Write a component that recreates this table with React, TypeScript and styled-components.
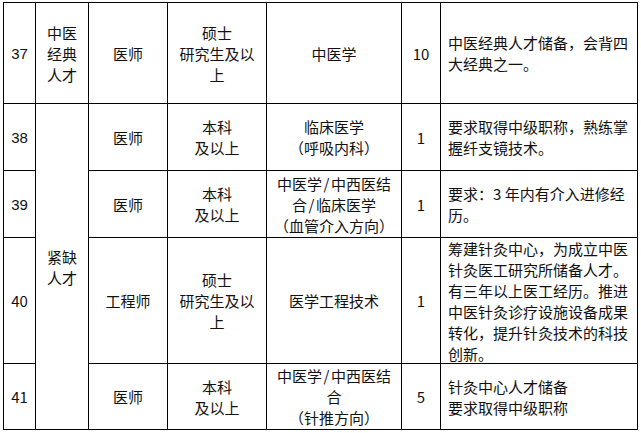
import React from 'react';
import styled, { createGlobalStyle } from 'styled-components';

const Global = createGlobalStyle`
  html, body {
    margin: 0;
    padding: 0;
    background: #fff;
  }
  body {
    width: 641px;
    height: 433px;
    overflow: hidden;
    font-family: "Noto Sans CJK SC", "Noto Sans", sans-serif;
    color: #111;
  }
`;

const Page = styled.div`
  padding: 2px 0 0 3px;
`;

const Grid = styled.div`
  display: grid;
  grid-template-columns: 32px 53px 79px 99px 135px 39px 197px;
  grid-template-rows: 101px 67px 67px 126px 66px;
  width: max-content;
  border-top: 1px solid #000;
  border-left: 1px solid #000;
`;

const Cell = styled.div<{ $left?: boolean; $span?: number; $num?: boolean }>`
  box-sizing: border-box;
  border-right: 1px solid #000;
  border-bottom: 1px solid #000;
  grid-row: span ${(p) => p.$span ?? 1};
  display: flex;
  flex-direction: column;
  justify-content: center;
  align-items: ${(p) => (p.$left ? 'flex-start' : 'center')};
  text-align: ${(p) => (p.$left ? 'left' : 'center')};
  padding: ${(p) => (p.$left ? '0 0 0 7px' : '0')};
  font-size: 15px;
  line-height: 21px;
  white-space: nowrap;
  font-family: ${(p) =>
    p.$num ? '"Liberation Sans", Arial, sans-serif' : '"Noto Sans CJK SC", sans-serif'};
`;

const Line = styled.span`
  display: block;
`;

// the slash in the source is a wide half-width glyph
const Slash = styled.span`
  display: inline-block;
  width: 9px;
  text-align: center;
`;

const renderLine = (t: string) => {
  const parts = t.split('/');
  return parts.map((p, i) => (
    <React.Fragment key={i}>
      {i > 0 && <Slash>/</Slash>}
      {p}
    </React.Fragment>
  ));
};

const Lines = ({ items }: { items: string[] }) => (
  <>
    {items.map((t, i) => (
      <Line key={i}>{renderLine(t)}</Line>
    ))}
  </>
);

export default function App() {
  return (
    <Page>
      <Global />
      <Grid>
        {/* 37 */}
        <Cell $num>37</Cell>
        <Cell><Lines items={['中医', '经典', '人才']} /></Cell>
        <Cell>医师</Cell>
        <Cell><Lines items={['硕士', '研究生及以', '上']} /></Cell>
        <Cell>中医学</Cell>
        <Cell>10</Cell>
        <Cell $left><Lines items={['中医经典人才储备，会背四', '大经典之一。']} /></Cell>

        {/* 38 */}
        <Cell $num>38</Cell>
        <Cell $span={4}><Lines items={['紧缺', '人才']} /></Cell>
        <Cell>医师</Cell>
        <Cell><Lines items={['本科', '及以上']} /></Cell>
        <Cell><Lines items={['临床医学', '（呼吸内科）']} /></Cell>
        <Cell>1</Cell>
        <Cell $left><Lines items={['要求取得中级职称，熟练掌', '握纤支镜技术。']} /></Cell>

        {/* 39 */}
        <Cell $num>39</Cell>
        <Cell>医师</Cell>
        <Cell><Lines items={['本科', '及以上']} /></Cell>
        <Cell><Lines items={['中医学/中西医结', '合/临床医学', '（血管介入方向）']} /></Cell>
        <Cell>1</Cell>
        <Cell $left><Lines items={['要求：3 年内有介入进修经', '历。']} /></Cell>

        {/* 40 */}
        <Cell>40</Cell>
        <Cell>工程师</Cell>
        <Cell><Lines items={['硕士', '研究生及以', '上']} /></Cell>
        <Cell>医学工程技术</Cell>
        <Cell>1</Cell>
        <Cell $left>
          <Lines
            items={[
              '筹建针灸中心，为成立中医',
              '针灸医工研究所储备人才。',
              '有三年以上医工经历。推进',
              '中医针灸诊疗设施设备成果',
              '转化，提升针灸技术的科技',
              '创新。',
            ]}
          />
        </Cell>

        {/* 41 */}
        <Cell>41</Cell>
        <Cell>医师</Cell>
        <Cell><Lines items={['本科', '及以上']} /></Cell>
        <Cell><Lines items={['中医学/中西医结', '合', '（针推方向）']} /></Cell>
        <Cell>5</Cell>
        <Cell $left><Lines items={['针灸中心人才储备', '要求取得中级职称']} /></Cell>
      </Grid>
    </Page>
  );
}
